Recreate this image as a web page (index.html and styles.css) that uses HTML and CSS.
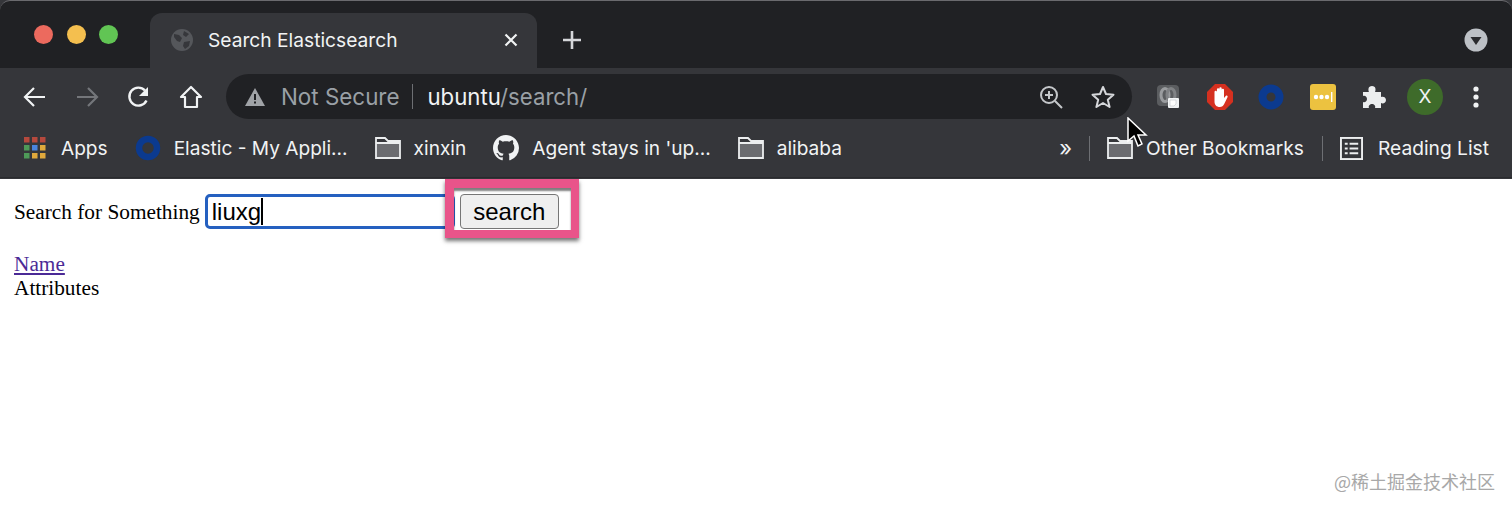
FILE: index.html
```html
<!DOCTYPE html>
<html lang="en">
<head>
    <meta charset="UTF-8">
    <title>Search Elasticsearch</title>
    <link rel="stylesheet" href="styles.css">
</head>
<body>

    <header class="browser">
        <div class="tab-strip">
            <div class="traffic">
                <span class="light red"></span>
                <span class="light yellow"></span>
                <span class="light green"></span>
            </div>
            <div class="tab">
                <svg class="globe" width="24" height="24" viewBox="0 0 24 24"><circle cx="12" cy="12" r="11" fill="#55575b"/><path d="M4 6l5 1 3 3-2 4-3-1-3-4zM14 3l5 3-3 3-3-2zM14 14l6-1-1 5-4 3-2-3z" fill="#36373b"/></svg>
                <span class="tab-title">Search Elasticsearch</span>
                <svg class="tab-close" width="14" height="14" viewBox="0 0 14 14"><path d="M1.5 1.5l11 11M12.5 1.5l-11 11" stroke="#f1f3f4" stroke-width="2.2"/></svg>
            </div>
            <svg class="new-tab" width="20" height="20" viewBox="0 0 20 20"><path d="M10 1v18M1 10h18" stroke="#d5d7da" stroke-width="2.6"/></svg>
            <div class="strip-menu">
                <svg width="24" height="24" viewBox="0 0 24 24"><circle cx="12" cy="12" r="11.5" fill="#bdc1c6"/><path d="M6.5 9h11L12 17z" fill="#2a2b2e"/></svg>
            </div>
        </div>

        <div class="toolbar">
            <div class="nav-buttons">
                <svg width="26" height="26" viewBox="0 0 26 26"><path d="M23 13H4M12 4l-9 9 9 9" fill="none" stroke="#f1f3f4" stroke-width="2.2"/></svg>
                <svg width="26" height="26" viewBox="0 0 26 26"><path d="M3 13h19M14 4l9 9-9 9" fill="none" stroke="#74767a" stroke-width="2.2"/></svg>
                <svg width="26" height="26" viewBox="0 0 26 26"><path d="M20.5 16.5A9 9 0 1 1 19 6.5" fill="none" stroke="#f1f3f4" stroke-width="2.4"/><path d="M22 3v9h-9z" fill="#f1f3f4"/></svg>
                <svg width="26" height="26" viewBox="0 0 26 26"><path d="M13 3L3 13h4v10h12V13h4z" fill="none" stroke="#f1f3f4" stroke-width="2.2" stroke-linejoin="round"/></svg>
            </div>
            <div class="omnibox">
                <svg class="warn" width="20" height="18" viewBox="0 0 20 18"><path d="M10 0l10 18H0z" fill="#a0a3a7"/><path d="M9 6h2v6H9zM9 13.5h2v2H9z" fill="#202124"/></svg>
                <span class="not-secure">Not Secure</span>
                <span class="omni-sep"></span>
                <span class="url">ubuntu<span class="url-path">/search/</span></span>
                <svg class="zoom-icon" width="24" height="24" viewBox="0 0 24 24"><circle cx="10" cy="10" r="8" fill="none" stroke="#c4c7ca" stroke-width="2"/><path d="M16 16l7 7M6 10h8M10 6v8" stroke="#c4c7ca" stroke-width="2"/></svg>
                <svg class="star" width="24" height="24" viewBox="0 0 24 24"><path d="M12 2l3 7 7.500 .7-5.700 5 1.800 7.300L12 18l-6.600 4 1.800-7.300-5.700-5L9 9z" fill="none" stroke="#d5d7da" stroke-width="2" stroke-linejoin="round"/></svg>
            </div>
            <div class="extensions">
                <svg class="ext" width="26" height="26" viewBox="0 0 26 26"><rect x="2" y="1" width="22" height="21" rx="4" fill="#5b5d60"/><ellipse cx="10" cy="11" rx="4" ry="6.500" fill="none" stroke="#9a9c9f" stroke-width="3"/><ellipse cx="16" cy="11" rx="4" ry="6.500" fill="none" stroke="#808285" stroke-width="3"/><rect x="13" y="14" width="11" height="10" rx="1" fill="#f1f3f4"/><path d="M15 16h6v4l-2 2h-4z" fill="#fff" stroke="#c4c7ca" stroke-width=".6"/></svg>
                <svg class="ext" width="26" height="26" viewBox="0 0 26 26"><path d="M8 0h10l8 8v10l-8 8H8l-8-8V8z" fill="#d5301f"/><path d="M7.500 13V8a1.200 1.200 0 0 1 2.400 0V5.500a1.200 1.200 0 0 1 2.400 0V4.500a1.200 1.200 0 0 1 2.400 0v1a1.200 1.200 0 0 1 2.300 .3V14l1.700-2c1.200-1.200 2.400 0 1.800 1.200l-3.300 6.800c-1 2-2.200 3-4.400 3-3.300 0-5.300-2.200-5.300-5.500z" fill="#fff"/></svg>
                <svg class="ext" width="26" height="26" viewBox="0 0 26 26"><circle cx="13" cy="13" r="8.500" fill="none" stroke="#0b3a8f" stroke-width="8"/></svg>
                <svg class="ext" width="26" height="26" viewBox="0 0 26 26"><rect width="26" height="26" rx="3" fill="#ecc240"/><circle cx="6" cy="13" r="2.200" fill="#fff"/><circle cx="11.500" cy="13" r="2.200" fill="#fff"/><circle cx="17" cy="13" r="2.200" fill="#fff"/><rect x="21" y="8" width="1.400" height="10" fill="#fff"/></svg>
                <svg class="ext" width="26" height="26" viewBox="0 0 26 26"><path d="M2 8h6c-1-2-1-6 3-6s4 4 3 6h6v5c2-1 5 0 5 3s-3 4-5 3v5h-6c1-2-1-4-3-4s-4 2-3 4H2v-6c2 1 4-1 4-3s-2-4-4-3z" fill="#eceeef"/></svg>
                <span class="avatar">X</span>
                <svg class="kebab" width="6" height="22" viewBox="0 0 6 22"><circle cx="3" cy="3" r="2.600" fill="#f1f3f4"/><circle cx="3" cy="11" r="2.600" fill="#f1f3f4"/><circle cx="3" cy="19" r="2.600" fill="#f1f3f4"/></svg>
            </div>
        </div>

        <div class="bookmarks">
            <div class="bm-item">
                <svg class="apps-icon" width="22" height="24" viewBox="0 0 22 24"><rect y="1" width="5.500" height="5.500" fill="#b5493d"/><rect x="8" y="1" width="5.500" height="5.500" fill="#b5493d"/><rect x="16" y="1" width="5.500" height="5.500" fill="#b5493d"/><rect y="9" width="5.500" height="5.500" fill="#4e9a58"/><rect x="8" y="9" width="5.500" height="5.500" fill="#4a84dc"/><rect x="16" y="9" width="5.500" height="5.500" fill="#e0a93c"/><rect y="17" width="5.500" height="5.500" fill="#4e9a58"/><rect x="8" y="17" width="5.500" height="5.500" fill="#e0a93c"/><rect x="16" y="17" width="5.500" height="5.500" fill="#e0a93c"/></svg>
                <span>Apps</span>
            </div>
            <div class="bm-item">
                <svg width="26" height="26" viewBox="0 0 26 26"><circle cx="13" cy="13" r="9" fill="none" stroke="#0b3a8f" stroke-width="6.500"/></svg>
                <span>Elastic - My Appli...</span>
            </div>
            <div class="bm-item">
                <svg width="26" height="22" viewBox="0 0 26 22"><path d="M1 6h24v15H1z" fill="#6b6c70"/><path d="M1 21V1h9l3 3h12v17zM1 6h24" fill="none" stroke="#eceeef" stroke-width="1.800"/></svg>
                <span>xinxin</span>
            </div>
            <div class="bm-item">
                <svg width="26" height="26" viewBox="0 0 16 16"><path fill="#f1f3f4" d="M8 0C3.580 0 0 3.580 0 8c0 3.540 2.290 6.530 5.470 7.590.4.070.55-.17.55-.38 0-.19-.01-.82-.01-1.490-2.010.37-2.530-.49-2.690-.94-.09-.23-.48-.94-.82-1.130-.28-.15-.68-.52-.01-.53.63-.01 1.080.58 1.230.82.720 1.210 1.870.87 2.330.66.070-.52.280-.87.510-1.070-1.780-.2-3.640-.89-3.640-3.950 0-.87.310-1.590.820-2.150-.08-.2-.36-1.020.08-2.120 0 0 .67-.21 2.200.82.640-.18 1.320-.27 2-.27s1.360.09 2 .27c1.530-1.040 2.200-.82 2.200-.82.440 1.100.16 1.920.08 2.120.51.560.82 1.270.82 2.150 0 3.070-1.870 3.750-3.650 3.950.29.250.54.730.54 1.480 0 1.070-.01 1.930-.01 2.200 0 .21.150.46.550.38A8.010 8.010 0 0 0 16 8c0-4.420-3.580-8-8-8z"/></svg>
                <span>Agent stays in 'up...</span>
            </div>
            <div class="bm-item">
                <svg width="26" height="22" viewBox="0 0 26 22"><path d="M1 6h24v15H1z" fill="#6b6c70"/><path d="M1 21V1h9l3 3h12v17zM1 6h24" fill="none" stroke="#eceeef" stroke-width="1.800"/></svg>
                <span>alibaba</span>
            </div>
            <div class="bm-right">
                <span class="chevrons">»</span>
                <span class="bm-sep"></span>
                <div class="bm-item bm-other">
                    <svg width="26" height="22" viewBox="0 0 26 22"><path d="M1 6h24v15H1z" fill="#6b6c70"/><path d="M1 21V1h9l3 3h12v17zM1 6h24" fill="none" stroke="#eceeef" stroke-width="1.800"/></svg>
                    <span>Other Bookmarks</span>
                </div>
                <span class="bm-sep"></span>
                <div class="bm-item bm-reading">
                    <svg width="23" height="23" viewBox="0 0 24 24"><rect x="1" y="1" width="22" height="22" fill="none" stroke="#eceeef" stroke-width="2"/><path d="M5 7h3M10 7h9M5 12h3M10 12h9M5 17h3M10 17h9" stroke="#eceeef" stroke-width="2"/></svg>
                    <span>Reading List</span>
                </div>
            </div>
        </div>
    </header>

    <main class="page">
        <form class="search-form">
            <label for="q">Search for Something</label>
            <div class="fake-input" id="q"><span class="typed">liuxg</span></div>
            <button type="button" class="search-button">search</button>
        </form>
        <div class="results">
            <a href="#" class="name-link">Name</a>
            <div>Attributes</div>
        </div>
    </main>

    <div class="highlight"></div>
    <svg class="cursor" width="22" height="32" viewBox="0 0 22 32"><path d="M2 1v23l6-5 4 10 4-2-4-9h8z" fill="#000" stroke="#fff" stroke-width="1.500"/></svg>
    <div class="watermark">@稀土掘金技术社区</div>

</body>
</html>
```
FILE: styles.css
```css
* {
    box-sizing: border-box;
    margin: 0;
    padding: 0;
}

html, body {
    height: 100%;
}

body {
    background: #fff;
    color: #000;
    font-family: 'Liberation Serif', serif;
    overflow: hidden;
    position: relative;
}

.browser {
    font-family: 'Inter', 'Liberation Sans', sans-serif;
    color: #f1f3f4;
    background: #35363a;
    height: 179px;
}

/* tab strip */
.tab-strip {
    display: flex;
    align-items: flex-end;
    height: 68px;
    background: #202124;
    border-top: 1px solid #6a6a6e;
    border-radius: 10px 10px 0 0;
    padding-left: 34px;
}

.traffic {
    display: flex;
    gap: 13.5px;
    align-self: flex-start;
    margin-top: 24px;
    width: 116px;
}

.light {
    width: 19px;
    height: 19px;
    border-radius: 50%;
}

.red { background: #ec6a5e; }
.yellow { background: #f4bf4f; }
.green { background: #61c554; }

.tab {
    display: flex;
    align-items: center;
    width: 387px;
    height: 55px;
    background: #35363a;
    border-radius: 12px 12px 0 0;
    padding: 0 19px 2px 20px;
}

.tab-title {
    font-size: 19.2px;
    margin-left: 14px;
    flex: 1;
}

.new-tab {
    align-self: center;
    margin: 10px 0 0 25px;
}

.strip-menu {
    display: flex;
    margin-left: auto;
    margin-right: 24px;
    align-self: center;
    margin-top: 11px;
}

/* toolbar */
.toolbar {
    display: flex;
    align-items: center;
    height: 56px;
    padding: 1px 0 0 22px;
}

.nav-buttons {
    display: flex;
    gap: 26px;
    width: 204px;
}

.omnibox {
    display: flex;
    align-items: center;
    width: 906px;
    height: 45px;
    background: #202124;
    border-radius: 23px;
    padding: 0 17px 0 19px;
}

.not-secure {
    font-size: 22.4px;
    color: #9aa0a6;
    margin-left: 16px;
}

.omni-sep {
    width: 1px;
    height: 25px;
    background: #6d6f73;
    margin: 0 14px 0 13px;
}

.url {
    font-size: 22.2px;
    color: #f1f3f4;
    flex: 1;
}

.url-path {
    color: #9aa0a6;
}

.zoom-icon {
    margin-right: 28px;
}

.extensions {
    display: flex;
    align-items: center;
    margin-left: 23px;
}

.ext {
    margin-right: 25.5px;
}

.avatar {
    width: 36px;
    height: 36px;
    border-radius: 50%;
    background: #3e6b2a;
    display: flex;
    align-items: center;
    justify-content: center;
    font-size: 19px;
    margin-left: -5.5px;
}

.kebab {
    margin-left: 30px;
}

/* bookmarks */
.bookmarks {
    display: flex;
    align-items: center;
    height: 54px;
    padding: 0 23px 5px 24px;
    font-size: 19.1px;
    border-bottom: 1px solid #2a2b2e;
}

.bm-item {
    display: flex;
    align-items: center;
    gap: 13px;
    margin-right: 27px;
    white-space: nowrap;
}

.apps-icon {
    margin-right: 2px;
}

.bm-right {
    display: flex;
    align-items: center;
    margin-left: auto;
    font-size: 19.2px;
}

.bm-right .bm-item {
    margin-right: 0;
}

.bm-reading {
    gap: 15px;
}

.chevrons {
    font-size: 22px;
    margin-right: 17px;
}

.bm-sep {
    width: 1px;
    height: 25px;
    background: #6d6f73;
    margin-right: 17px;
}

.bm-other + .bm-sep {
    margin: 0 17px 0 18px;
}

/* page */
.page {
    padding: 15px 14px 0;
    font-size: 21.3px;
}

.search-form {
    display: flex;
    align-items: center;
}

.search-form label {
    padding-top: 2px;
}

.fake-input {
    width: 250px;
    height: 35px;
    margin-left: 5px;
    border: 3px solid #2560c0;
    border-radius: 5px;
    font: 24px 'Liberation Sans', sans-serif;
    padding-left: 4px;
    line-height: 29px;
}

.typed {
    border-right: 2px solid #000;
}

.search-button {
    width: 99px;
    height: 35px;
    margin-left: 5px;
    background: #efefef;
    border: 1px solid #767676;
    border-radius: 4px;
    font: 24px 'Liberation Sans', sans-serif;
}

.results {
    margin-top: 23px;
    line-height: 24px;
}

.name-link {
    color: #4b2a96;
}

/* annotations over the page */
.highlight {
    position: absolute;
    left: 445px;
    top: 179px;
    width: 134px;
    height: 59px;
    border: 9px solid #e9548a;
    border-width: 9px 8px 8px 9px;
    box-shadow: 0 3px 4px rgba(0, 0, 0, 0.55), inset 0 3px 2px rgba(0, 0, 0, 0.5);
}

.cursor {
    position: absolute;
    left: 1126px;
    top: 117px;
}

.watermark {
    position: absolute;
    right: 17px;
    top: 468px;
    font: 18px 'Noto Sans CJK SC', sans-serif;
    color: #a8a8a8;
}
```
